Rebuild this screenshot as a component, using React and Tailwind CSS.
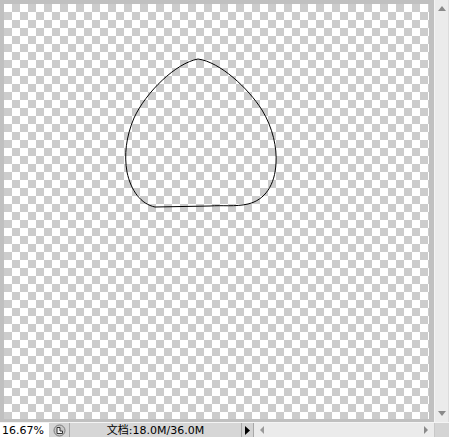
export default function App() {
    return (
        <div className="w-[449px] h-[437px] flex flex-col bg-[#d4d4d4] overflow-hidden" style={{ fontFamily: '"DejaVu Sans", "Noto Sans CJK SC", sans-serif' }}>
            {/* canvas + vertical scrollbar */}
            <div className="flex h-[422px]">
                <div className="w-[434px] h-full bg-[#c0c0c0] pl-[4px] pt-[4px] pr-[5px] pb-[3px]">
                    <div className="relative w-full h-full bg-[image:conic-gradient(#cccccc_25%,#ffffff_0_50%,#cccccc_0_75%,#ffffff_0)] bg-[length:16px_16px]">
                        <svg className="absolute left-0 top-0" width="425" height="415" viewBox="4 4 425 415">
                            <path
                                d="M198,59 C220,62 248,88 262,110 C273,128 277,148 276,163 C275,185 265,200 248,204 C235,207 222,205 210,206 L155,207 C141,204 131,191 127,172 C124,155 126,137 134,118 C146,92 176,63 198,59 Z"
                                fill="none"
                                stroke="#000"
                                strokeWidth="1"
                            />
                        </svg>
                    </div>
                </div>
                <div className="w-[1px] bg-[#f4f4f4]" />
                <div className="flex-1 flex flex-col justify-between bg-[#ebebeb] border-r border-[#dcdcdc] py-[6px]">
                    <div className="flex justify-center">
                        <svg width="8" height="5" viewBox="0 0 8 5"><path d="M4,0 L8,5 L0,5 Z" fill="#8a8a8a" /></svg>
                    </div>
                    <div className="flex justify-center">
                        <svg width="8" height="5" viewBox="0 0 8 5"><path d="M0,0 L8,0 L4,5 Z" fill="#8a8a8a" /></svg>
                    </div>
                </div>
            </div>
            <div className="h-[1px] bg-[#f4f4f4]" />
            {/* status bar */}
            <div className="flex flex-1 items-stretch text-[11px] leading-none text-black">
                <div className="w-[49px] bg-white flex items-center pl-[2px]">16.67%</div>
                <div className="w-[21px] flex items-center justify-center border-r border-[#a8a8a8]">
                    <svg width="13" height="13" viewBox="0 0 13 13">
                        <circle cx="6.5" cy="6.5" r="5.5" fill="#c8c8c8" stroke="#7a7a7a" strokeWidth="1" />
                        <path d="M4,3.5 L4,9.5 L9.5,9.5 L9.5,7 L7,7 L7,3.5 Z" fill="#f2f2f2" stroke="#333" strokeWidth="1" />
                    </svg>
                </div>
                <div className="w-[172px] flex items-center justify-center border-r border-[#a8a8a8] bg-[#d6d6d6]">文档:18.0M/36.0M</div>
                <div className="w-[12px] flex items-center justify-center border-r border-[#a8a8a8]">
                    <svg width="5" height="9" viewBox="0 0 5 9"><path d="M0,0 L5,4.5 L0,9 Z" fill="#000" /></svg>
                </div>
                <div className="w-[180px] bg-[#ebebeb] flex items-center justify-between px-[6px]">
                    <svg width="4" height="8" viewBox="0 0 4 8"><path d="M4,0 L0,4 L4,8 Z" fill="#9a9a9a" /></svg>
                    <svg width="4" height="8" viewBox="0 0 4 8"><path d="M0,0 L4,4 L0,8 Z" fill="#8a8a8a" /></svg>
                </div>
                <div className="flex-1 bg-[#d4d4d4] border-l border-[#c8c8c8]" />
            </div>
        </div>
    );
}
